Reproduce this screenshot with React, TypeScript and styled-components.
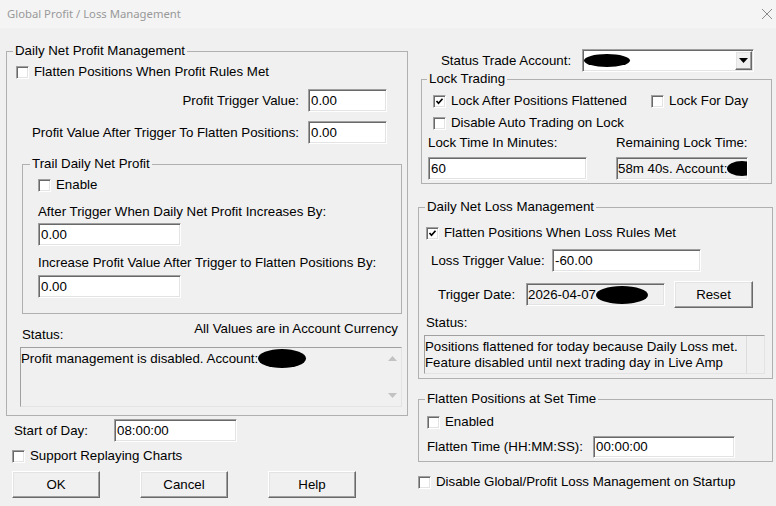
import React from 'react';
import styled, { createGlobalStyle } from 'styled-components';

const GlobalStyle = createGlobalStyle`
  html, body {
    margin: 0;
    padding: 0;
    background: #f0f0f0;
  }
  body {
    font-family: "Liberation Sans", Arial, sans-serif;
  }
`;

// classic 3D sunken edge used by text boxes and check boxes
const sunken = `
  border-style: solid;
  border-width: 1px;
  border-color: #a0a0a0 #ffffff #ffffff #a0a0a0;
  box-shadow: inset 1px 1px 0 #696969, inset -1px -1px 0 #e3e3e3;
`;

const raised = `
  border-style: solid;
  border-width: 1px;
  border-color: #ffffff #696969 #696969 #ffffff;
  box-shadow: inset -1px -1px 0 #a0a0a0, inset 1px 1px 0 #e3e3e3;
`;

const Window = styled.div`
  width: 776px;
  height: 506px;
  overflow: hidden;
  background: #f0f0f0;
  color: #000;
  font-size: 13.3px;
  line-height: 16px;
  display: flex;
  flex-direction: column;
`;

const TitleBar = styled.div`
  height: 28px;
  flex-shrink: 0;
  background: #f4f4f4;
  display: flex;
  align-items: center;
  justify-content: space-between;
  padding: 0 2px 0 7px;
`;

const Title = styled.span`
  font-family: "Noto Sans", "Open Sans", sans-serif;
  font-size: 11.3px;
  color: #999999;
`;

const Body = styled.div`
  display: flex;
  gap: 10px;
  padding-left: 6px;
`;

const Column = styled.div<{ $w: number; $pt?: number }>`
  width: ${(p) => p.$w}px;
  padding-top: ${(p) => p.$pt ?? 0}px;
  display: flex;
  flex-direction: column;
`;

const Group = styled.fieldset<{ $mt?: number; $ml?: number; $mr?: number; $stretch?: boolean }>`
  margin: ${(p) => p.$mt ?? 0}px ${(p) => p.$mr ?? 0}px 0 ${(p) => p.$ml ?? 0}px;
  padding: 0;
  min-width: 0;
  border: 1px solid #b0b0b0;
  ${(p) => (p.$stretch ? 'align-self: stretch;' : '')}
`;

const Legend = styled.legend<{ $ml: number }>`
  margin-left: ${(p) => p.$ml}px;
  padding: 0 2px;
  line-height: 16px;
`;

const GroupBody = styled.div<{ $pad: string }>`
  display: flex;
  flex-direction: column;
  align-items: flex-start;
  padding: ${(p) => p.$pad};
`;

const Row = styled.div<{ $mt?: number; $ml?: number; $mr?: number; $gap?: number; $end?: boolean }>`
  display: flex;
  align-items: center;
  align-self: stretch;
  justify-content: ${(p) => (p.$end ? 'flex-end' : 'flex-start')};
  gap: ${(p) => p.$gap ?? 0}px;
  margin: ${(p) => p.$mt ?? 0}px ${(p) => p.$mr ?? 0}px 0 ${(p) => p.$ml ?? 0}px;
`;

const Label = styled.span<{ $w?: number; $mt?: number; $ml?: number; $bottom?: boolean }>`
  flex-shrink: 0;
  white-space: nowrap;
  ${(p) => (p.$w ? `width: ${p.$w}px;` : '')}
  ${(p) => (p.$bottom ? 'align-self: flex-end;' : '')}
  margin-top: ${(p) => p.$mt ?? 0}px;
  margin-left: ${(p) => p.$ml ?? 0}px;
`;

const CheckLabel = styled.label<{ $mt?: number; $ml?: number; $w?: number }>`
  display: flex;
  align-items: center;
  gap: 5px;
  height: 16px;
  white-space: nowrap;
  margin-top: ${(p) => p.$mt ?? 0}px;
  margin-left: ${(p) => p.$ml ?? 0}px;
  ${(p) => (p.$w ? `width: ${p.$w}px;` : '')}
`;

const Box = styled.span`
  width: 13px;
  height: 13px;
  box-sizing: border-box;
  background: #ffffff;
  display: flex;
  align-items: center;
  justify-content: center;
  ${sunken}
`;

const Field = styled.div<{ $w: number; $h?: number; $mt?: number }>`
  width: ${(p) => p.$w}px;
  height: ${(p) => p.$h ?? 23}px;
  margin-top: ${(p) => p.$mt ?? 0}px;
  box-sizing: border-box;
  flex-shrink: 0;
  background: #ffffff;
  padding: 0 2px;
  display: flex;
  align-items: center;
  white-space: nowrap;
  ${sunken}
`;

const ReadOnly = styled(Field)`
  background: #f0f0f0;
  padding: 0 1px;
  overflow: hidden;
`;

const Redacted = styled.span<{ $w: number; $h: number }>`
  display: inline-block;
  width: ${(p) => p.$w}px;
  height: ${(p) => p.$h}px;
  border-radius: 50%;
  background: #000;
  flex-shrink: 0;
`;

const StatusHead = styled.div`
  align-self: stretch;
  display: flex;
  justify-content: space-between;
  height: 22px;
  margin: 7px 4px 0 6px;
`;

const StatusBox = styled.div<{ $w: number; $h: number; $mt?: number; $ml?: number }>`
  width: ${(p) => p.$w}px;
  height: ${(p) => p.$h}px;
  margin-top: ${(p) => p.$mt ?? 0}px;
  margin-left: ${(p) => p.$ml ?? 0}px;
  box-sizing: border-box;
  display: flex;
  background: #f0f0f0;
  border: 1px solid #a0a0a0;
  border-right-color: #e3e3e3;
  border-bottom-color: #e3e3e3;
`;

const StatusText = styled.div<{ $pt?: number }>`
  flex: 1;
  padding-top: ${(p) => p.$pt ?? 1}px;
  display: flex;
  flex-direction: column;
`;

const StatusLine = styled.div`
  display: flex;
  align-items: center;
  white-space: nowrap;
`;

const ScrollTrack = styled.div<{ $divider?: boolean }>`
  width: 17px;
  display: flex;
  flex-direction: column;
  align-items: center;
  justify-content: space-between;
  padding: 8px 0 8px;
  ${(p) => (p.$divider ? 'border-left: 1px solid #dcdcdc;' : '')}
`;

const Combo = styled(Field)`
  padding: 0 1px 0 1px;
  justify-content: space-between;
`;

const ComboButton = styled.span`
  width: 17px;
  height: 19px;
  box-sizing: border-box;
  background: #f0f0f0;
  display: flex;
  align-items: center;
  justify-content: center;
  ${raised}
`;

const ButtonRow = styled.div`
  display: flex;
  gap: 40px;
  margin: 7px 0 0 6px;
`;

const PushButton = styled.button<{ $w: number }>`
  width: ${(p) => p.$w}px;
  height: 27px;
  flex-shrink: 0;
  background: #f0f0f0;
  font: inherit;
  color: #000;
  padding: 0;
  ${raised}
`;

const CheckMark = () => (
  <svg width="9" height="9" viewBox="0 0 9 9">
    <path d="M1.5 4 L3.5 6.2 L7.5 1.8" fill="none" stroke="#000" strokeWidth="1.7" />
  </svg>
);

const Check: React.FC<{ text: string; checked?: boolean; mt?: number; ml?: number; w?: number }> = ({
  text,
  checked,
  mt,
  ml,
  w,
}) => (
  <CheckLabel $mt={mt} $ml={ml} $w={w}>
    <Box>{checked && <CheckMark />}</Box>
    {text}
  </CheckLabel>
);

const Arrow: React.FC<{ up?: boolean; color?: string }> = ({ up, color = '#c2c2c2' }) => (
  <svg width="9" height="5" viewBox="0 0 9 5">
    <path d={up ? 'M0 5 L4.5 0 L9 5 Z' : 'M0 0 L9 0 L4.5 5 Z'} fill={color} />
  </svg>
);

const App: React.FC = () => {
  return (
    <>
      <GlobalStyle />
      <Window>
        <TitleBar>
          <Title>Global Profit / Loss Management</Title>
          <svg width="22" height="14" viewBox="0 0 22 14">
            <path d="M10 2 L20 12 M20 2 L10 12" stroke="#8a8a8a" strokeWidth="1" />
          </svg>
        </TitleBar>
        <Body>
          <Column $w={402}>
            <Group $mt={15}>
              <Legend $ml={6}>Daily Net Profit Management</Legend>
              <GroupBody $pad="0 5px 8px 9px">
                <Check mt={5} text="Flatten Positions When Profit Rules Met" />
                <Row $mt={9} $mr={15} $gap={9} $end>
                  <Label>Profit Trigger Value:</Label>
                  <Field $w={79}>0.00</Field>
                </Row>
                <Row $mt={9} $mr={15} $gap={9} $end>
                  <Label>Profit Value After Trigger To Flatten Positions:</Label>
                  <Field $w={79}>0.00</Field>
                </Row>
                <Group $mt={12} $ml={6} $stretch>
                  <Legend $ml={7}>Trail Daily Net Profit</Legend>
                  <GroupBody $pad="0 0 15px 15px">
                    <Check mt={5} text="Enable" />
                    <Label $mt={11}>After Trigger When Daily Net Profit Increases By:</Label>
                    <Field $w={143} $mt={3}>0.00</Field>
                    <Label $mt={9}>Increase Profit Value After Trigger to Flatten Positions By:</Label>
                    <Field $w={143} $mt={4}>0.00</Field>
                  </GroupBody>
                </Group>
                <StatusHead>
                  <Label $bottom>Status:</Label>
                  <Label>All Values are in Account Currency</Label>
                </StatusHead>
                <StatusBox $w={382} $h={60} $mt={4} $ml={4}>
                  <StatusText>
                    <StatusLine>
                      Profit management is disabled. Account:
                      <Redacted $w={48} $h={19} />
                    </StatusLine>
                  </StatusText>
                  <ScrollTrack>
                    <Arrow up />
                    <Arrow />
                  </ScrollTrack>
                </StatusBox>
              </GroupBody>
            </Group>
            <Row $mt={3} $ml={8}>
              <Label $w={100}>Start of Day:</Label>
              <Field $w={123}>08:00:00</Field>
            </Row>
            <Check mt={6} ml={6} text="Support Replaying Charts" />
            <ButtonRow>
              <PushButton $w={88}>OK</PushButton>
              <PushButton $w={88}>Cancel</PushButton>
              <PushButton $w={88}>Help</PushButton>
            </ButtonRow>
          </Column>

          <Column $w={355} $pt={21}>
            <Row $ml={23} $gap={10}>
              <Label $w={131}>Status Trade Account:</Label>
              <Combo $w={172}>
                <Redacted $w={46} $h={13} />
                <ComboButton>
                  <Arrow color="#000" />
                </ComboButton>
              </Combo>
            </Row>
            <Group $mt={-1} $ml={3} $mr={1}>
              <Legend $ml={5}>Lock Trading</Legend>
              <GroupBody $pad="0 0 3px 6px">
                <Row $mt={6}>
                  <Check ml={5} w={218} checked text="Lock After Positions Flattened" />
                  <Check text="Lock For Day" />
                </Row>
                <Check mt={6} ml={5} text="Disable Auto Trading on Lock" />
                <Row $mt={4}>
                  <Label $w={188}>Lock Time In Minutes:</Label>
                  <Label>Remaining Lock Time:</Label>
                </Row>
                <Row $mt={6} $gap={29}>
                  <Field $w={159}>60</Field>
                  <ReadOnly $w={132}>
                    58m 40s. Account:
                    <Redacted $w={30} $h={15} />
                  </ReadOnly>
                </Row>
              </GroupBody>
            </Group>
            <Group $mt={15}>
              <Legend $ml={6}>Daily Net Loss Management</Legend>
              <GroupBody $pad="0 0 4px 5px">
                <Check mt={10} ml={2} checked text="Flatten Positions When Loss Rules Met" />
                <Row $mt={8} $ml={7}>
                  <Label $w={121}>Loss Trigger Value:</Label>
                  <Field $w={149}>-60.00</Field>
                </Row>
                <Row $mt={9} $ml={14} $gap={9}>
                  <Label $w={79}>Trigger Date:</Label>
                  <ReadOnly $w={139}>
                    2026-04-07
                    <Redacted $w={52} $h={18} />
                  </ReadOnly>
                  <PushButton $w={79}>Reset</PushButton>
                </Row>
                <Label $mt={7} $ml={2}>Status:</Label>
                <StatusBox $w={341} $h={39} $mt={4}>
                  <StatusText $pt={3}>
                    <StatusLine>Positions flattened for today because Daily Loss met.</StatusLine>
                    <StatusLine>Feature disabled until next trading day in Live Amp</StatusLine>
                  </StatusText>
                  <ScrollTrack $divider />
                </StatusBox>
              </GroupBody>
            </Group>
            <Group $mt={12}>
              <Legend $ml={6}>Flatten Positions at Set Time</Legend>
              <GroupBody $pad="0 0 3px 8px">
                <Check mt={7} text="Enabled" />
                <Row $mt={6}>
                  <Label $w={166}>Flatten Time (HH:MM:SS):</Label>
                  <Field $w={142} $h={22}>00:00:00</Field>
                </Row>
              </GroupBody>
            </Group>
            <Check mt={12} text="Disable Global/Profit Loss Management on Startup" />
          </Column>
        </Body>
      </Window>
    </>
  );
};

export default App;
